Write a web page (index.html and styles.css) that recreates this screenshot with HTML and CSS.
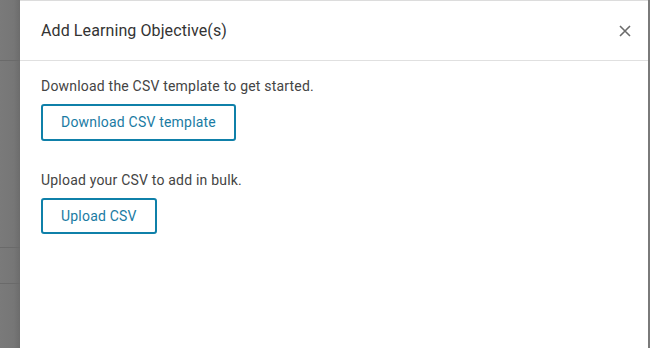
FILE: index.html
```html
<!DOCTYPE html>
<html lang="en">
<head>
    <meta charset="UTF-8" />
    <title>Add Learning Objective(s)</title>
    <link rel="stylesheet" href="styles.css">
</head>
<body>
    <div class="pantalla">
        <div class="fondo">
            <div class="fila fila-1"></div>
            <div class="fila fila-2"></div>
            <div class="fila fila-3"></div>
        </div>

        <div class="panel">
            <div class="cabecera">
                <h2 class="titulo">Add Learning Objective(s)</h2>
                <button type="button" class="cerrar" aria-label="Close">
                    <svg width="12" height="12" viewBox="0 0 12 12">
                        <path d="M1 1 L11 11 M11 1 L1 11" stroke="#6b6b6b" stroke-width="1.6" fill="none"/>
                    </svg>
                </button>
            </div>

            <div class="cuerpo">
                <p class="texto">Download the CSV template to get started.</p>
                <button type="button" class="boton">Download CSV template</button>

                <p class="texto texto-2">Upload your CSV to add in bulk.</p>
                <button type="button" class="boton boton-2">Upload CSV</button>
            </div>
        </div>
        <div class="borde"></div>
    </div>
</body>
</html>
```

FILE: styles.css
```css
body {
    margin: 0;
    padding: 0;
    font-family: Roboto, "Liberation Sans", Arial, sans-serif;
    background: #ffffff;
}

.pantalla {
    display: flex;
    height: 348px;
    width: 650px;
    overflow: hidden;
}

.fondo {
    width: 20px;
    flex-shrink: 0;
    background: linear-gradient(to right, #7a7a7a, #767676 70%, #6c6c6c);
    display: flex;
    flex-direction: column;
}
.fila {
    border-bottom: 1px solid #6a6a6a;
}
.fila-1 { height: 60px; }
.fila-2 { height: 186px; }
.fila-3 { height: 35px; }

.panel {
    flex: 1;
    background: #ffffff;
    border-top: 1px solid #dcdcdc;
}

.borde {
    width: 2px;
    flex-shrink: 0;
    background: #7a7a7a;
}

.cabecera {
    height: 59px;
    border-bottom: 1px solid #e0e0e0;
    display: flex;
    align-items: center;
    justify-content: space-between;
    padding: 0 17px 0 21px;
}
.titulo {
    margin: 0;
    font-size: 16px;
    font-weight: 400;
    letter-spacing: 0.1px;
    color: #333333;
}
.cerrar {
    border: none;
    background: none;
    padding: 0;
    width: 12px;
    height: 12px;
    cursor: pointer;
    display: flex;
}

.cuerpo {
    padding: 15px 21px;
}
.texto {
    margin: 0 0 8px;
    font-size: 14px;
    line-height: 20px;
    letter-spacing: 0.2px;
    color: #444444;
}
.texto-2 {
    margin-top: 29px;
    margin-bottom: 8px;
}
.boton {
    display: block;
    font-family: Roboto, "Liberation Sans", Arial, sans-serif;
    font-size: 14px;
    line-height: 17px;
    letter-spacing: 0.2px;
    padding: 8px 18px;
    background: #ffffff;
    color: #1a7ba3;
    border: 2px solid #0f80a9;
    border-radius: 3px;
    cursor: pointer;
}
.boton-2 {
    padding-bottom: 7px;
}
```
